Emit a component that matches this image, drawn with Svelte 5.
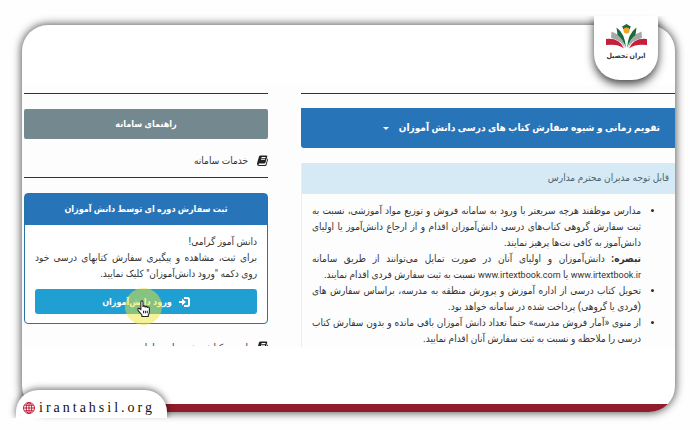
<script>
	const notices = [
		{
			lines: [
				{ text: "مدارس موظفند هرچه سریعتر با ورود به سامانه فروش و توزیع مواد آموزشی، نسبت به" },
				{ text: "ثبت سفارش گروهی کتاب‌های درسی دانش‌آموزان اقدام و از ارجاع دانش‌آموز یا اولیای" },
				{ text: "دانش‌آموز به کافی نت‌ها پرهیز نمایند.", last: true },
				{ lead: "تبصره:", text: "دانش‌آموزان و اولیای آنان در صورت تمایل می‌توانند از طریق سامانه" },
				{ text: "www.irtextbook.ir یا www.irtextbook.com نسبت به ثبت سفارش فردی اقدام نمایند.", last: true },
			],
		},
		{
			lines: [
				{ text: "تحویل کتاب درسی از اداره آموزش و پرورش منطقه به مدرسه، براساس سفارش های" },
				{ text: "(فردی یا گروهی) پرداخت شده در سامانه خواهد بود.", last: true },
			],
		},
		{
			lines: [
				{ text: "از منوی «آمار فروش مدرسه» حتماً تعداد دانش آموزان باقی مانده و بدون سفارش کتاب" },
				{ text: "درسی را ملاحظه و نسبت به ثبت سفارش آنان اقدام نمایید.", last: true },
			],
		},
	];

	// keeps the addresses as their own parts
	const split = (text) => text.split(/(www\.\S+)/).filter(Boolean);
</script>

{#snippet book()}
	<svg class="book" viewBox="0 0 22 22" aria-hidden="true">
		<path d="M7 1h12q2 0 1.500 2L17 15q-.5 2-2.500 2H5q-2 0-2 1.500T5 20h11q1 0 1.500-1.500L21 7q1.500 1 1 2.500L19 20q-.5 2-2.500 2H4q-4 0-4-4 0-2 .5-3L4 3q.8-2 3-2z" />
		<path class="rule" d="M9 5h8M8 8.500h8" />
	</svg>
{/snippet}

<div class="page" dir="rtl">
	<main class="frame">
		<div class="shot">
			<section class="main-col">
				<button class="calendar">
					تقویم زمانی و شیوه سفارش کتاب های درسی دانش آموزان
					<span class="caret"></span>
				</button>
				<div class="panel">
					<h2>قابل توجه مدیران محترم مدارس</h2>
					<ul>
						{#each notices as notice}
							<li>
								{#each notice.lines as line}
									<span class="line" class:last={line.last}>
										{#if line.lead}<b>{line.lead}</b>{/if}
										{#each split(line.text) as part}{#if part.startsWith("www.")}<a class="url" href="#{part}">{part}</a>{:else}{part}{/if}{/each}
									</span>
								{/each}
							</li>
						{/each}
					</ul>
				</div>
			</section>

			<aside class="side-col">
				<h2 class="guide">راهنمای سامانه</h2>
				<a class="service" href="#services">
					{@render book()}
					خدمات سامانه
				</a>
				<div class="order">
					<h2>ثبت سفارش دوره ای توسط دانش آموزان</h2>
					<div class="order-body">
						<p>
							<span class="line last">دانش آموز گرامی!</span>
							<span class="line">برای ثبت، مشاهده و پیگیری سفارش کتابهای درسی خود</span>
							<span class="line last">روی دکمه "ورود دانش‌آموزان" کلیک نمایید.</span>
						</p>
						<button class="login">
							<svg class="enter" viewBox="0 0 22 20" aria-hidden="true">
								<path d="M10 2h7q3 0 3 3v10q0 3-3 3h-7" />
								<path class="head" d="M0 8h6V3l8 7-8 7v-5H0z" />
							</svg>
							<span>ورود دانش‌آموزان</span>
							<span class="halo"></span>
							<svg class="hand" viewBox="0 0 24 32" aria-hidden="true">
								<path d="M7 18V4q0-2.500 2-2.500T11 4v9q0-2 2-2t2 2v1q0-2 2-2t2 2v1q0-2 2-2t2 2v8q0 3-2 5v3H9v-3l-7-8q-1.500-3 0-4 2-1 5 2z" />
								<path d="M12 20v5M15.500 20v5M19 20v5" />
							</svg>
						</button>
					</div>
				</div>
				<a class="service cut" href="#list">
					{@render book()}
					لیست کتابفروشی های سامانه
				</a>
			</aside>
		</div>
		<div class="bar"></div>
	</main>

	<div class="brand">
		<svg viewBox="0 0 82 50" aria-hidden="true">
			<path fill="#176b3b" d="M31 6 41 0l10 6-3 1v4q-7-5-14 0V7z" />
			<circle cx="41" cy="13" r="6" fill="#f2a51f" />
			<path fill="#c51f3c" d="M0 30q27-3 36 19Q25 39 0 42zM82 30q-27-3-36 19 11-10 36-7z" />
			<path fill="#a7a9a8" d="M11 15q22 7 27 33Q30 32 10 28zM71 15q-22 7-27 33 8-16 28-20z" />
			<path fill="#176b3b" d="M21 7q17 12 19 41Q33 29 23 22zM61 7Q44 19 42 48q7-19 17-26z" />
		</svg>
		<strong>ایران تحصیل</strong>
	</div>

	<a class="site" dir="ltr" href="#home">
		<svg viewBox="0 0 24 24" aria-hidden="true">
			<circle cx="12" cy="12" r="11" />
			<ellipse cx="12" cy="12" rx="5.500" ry="11" />
			<path d="M12 1v22M1 12h22M3 6.500h18M3 17.500h18" />
		</svg>
		irantahsil.org
	</a>
</div>

<style>
	:global(body) {
		background: #fefefe;
	}

	.page {
		position: relative;
		display: flex;
		box-sizing: border-box;
		min-height: 100vh;
		padding: 25px 25px 18px 22px;
		font-family: Roboto, "DejaVu Sans Condensed", "DejaVu Sans", sans-serif;
		font-size: 10px;
		line-height: 16px;
		color: #333;
	}

	h2,
	p,
	ul {
		margin: 0;
		padding: 0;
	}
	h2 {
		font-size: 9px;
	}
	button {
		border: 0;
		font: inherit;
		color: #fff;
		cursor: pointer;
	}
	a {
		color: inherit;
		text-decoration: none;
	}

	.frame {
		display: flex;
		flex: 1;
		flex-direction: column;
		overflow: hidden;
		min-width: 0;
		padding-top: 60px;
		border-radius: 26px;
		background: #fff;
		box-shadow: 0 0 8px 1px rgba(0, 0, 0, 0.65);
	}
	.shot {
		display: grid;
		grid-template-columns: 374fr 244fr;
		gap: 33px;
		padding: 8px 0 0 2px;
		background: #fdfdfd;
	}
	.bar {
		height: 8px;
		margin-top: auto;
		background: #8f1d2b;
	}

	.main-col,
	.side-col {
		min-width: 0;
		border-top: 1px solid #333;
	}

	.calendar {
		display: flex;
		align-items: center;
		gap: 10px;
		width: 100%;
		height: 40px;
		margin-top: 14px;
		padding: 0 15px;
		border-radius: 0 0 0 3px;
		background: #2874b8;
		font-weight: bold;
	}
	.caret {
		border: 3px solid transparent;
		border-top-color: #fff;
		border-bottom: 0;
	}

	.panel {
		margin-top: 15px;
		border-left: 1px solid #e9eff2;
	}
	.panel h2 {
		padding: 7px 6px 8px;
		background: #d5eaf4;
		font-size: 10px;
		font-weight: normal;
		color: #4d6470;
	}
	.panel ul {
		padding: 9px 34px 0 10px;
	}
	.line {
		display: block;
		text-align: justify;
		text-align-last: justify;
		white-space: nowrap;
	}
	.last {
		text-align-last: start;
	}
	.url {
		font-size: 9px;
	}

	.guide {
		margin-top: 15px;
		padding: 7px 0;
		border-radius: 2px;
		background: #73898f;
		text-align: center;
		color: #fff;
	}
	.service {
		display: flex;
		align-items: center;
		gap: 9px;
		box-sizing: border-box;
		height: 39px;
		padding-top: 5px;
		border-bottom: 1px solid #333;
	}
	.book {
		width: 11px;
		height: 11px;
		fill: #222;
	}
	.rule {
		stroke: #fff;
		stroke-width: 2;
	}
	.cut {
		align-items: flex-start;
		overflow: hidden;
		height: 5px;
		margin-top: 17px;
		padding: 0;
		border: 0;
		line-height: 14px;
	}

	.order {
		margin-top: 15px;
		border: 1px solid #2874a5;
		border-radius: 4px;
		background: #fff;
	}
	.order h2 {
		padding: 7px 0 8px;
		background: #2874b8;
		text-align: center;
		color: #fff;
	}
	.order-body {
		padding: 9px 10px;
	}
	.login {
		position: relative;
		display: flex;
		justify-content: center;
		align-items: center;
		gap: 7px;
		width: 100%;
		height: 25px;
		margin-top: 7px;
		border-radius: 3px;
		background: #209fd3;
		font-size: 9px;
		font-weight: bold;
	}
	.enter {
		width: 11px;
		height: 10px;
		fill: none;
		stroke: #fff;
		stroke-width: 4;
	}
	.enter .head {
		fill: #fff;
		stroke: none;
	}
	.halo {
		position: absolute;
		top: -1px;
		left: 90px;
		width: 37px;
		height: 37px;
		border-radius: 50%;
		background: rgba(236, 230, 50, 0.5);
	}
	.hand {
		position: absolute;
		top: 11px;
		left: 102px;
		width: 13px;
		height: 17px;
		fill: #fff;
		stroke: #222;
		stroke-width: 2;
	}

	.brand {
		position: absolute;
		top: 16px;
		right: 42px;
		display: flex;
		flex-direction: column;
		align-items: center;
		box-sizing: border-box;
		width: 64px;
		height: 64px;
		padding-top: 8px;
		border-radius: 0 0 26px 26px;
		background: #fff;
		box-shadow: 0 4px 10px rgba(0, 0, 0, 0.75);
		clip-path: inset(0 -20px -20px);
		font-size: 7px;
		line-height: 14px;
	}
	.brand svg {
		width: 41px;
		height: 25px;
	}

	.site {
		position: absolute;
		bottom: 12px;
		left: 16px;
		display: flex;
		align-items: center;
		gap: 4px;
		box-sizing: border-box;
		height: 28px;
		padding: 8px 12px 0 7px;
		border-radius: 22px 22px 0 0;
		background: #fff;
		box-shadow: 0 -1px 7px rgba(0, 0, 0, 0.6);
		clip-path: inset(-12px -12px 0);
		font-family: "Liberation Serif", serif;
		font-size: 14px;
		letter-spacing: 3px;
		color: #111;
	}
	.site svg {
		width: 12px;
		height: 12px;
		fill: none;
		stroke: #c0213c;
		stroke-width: 2;
	}
</style>
